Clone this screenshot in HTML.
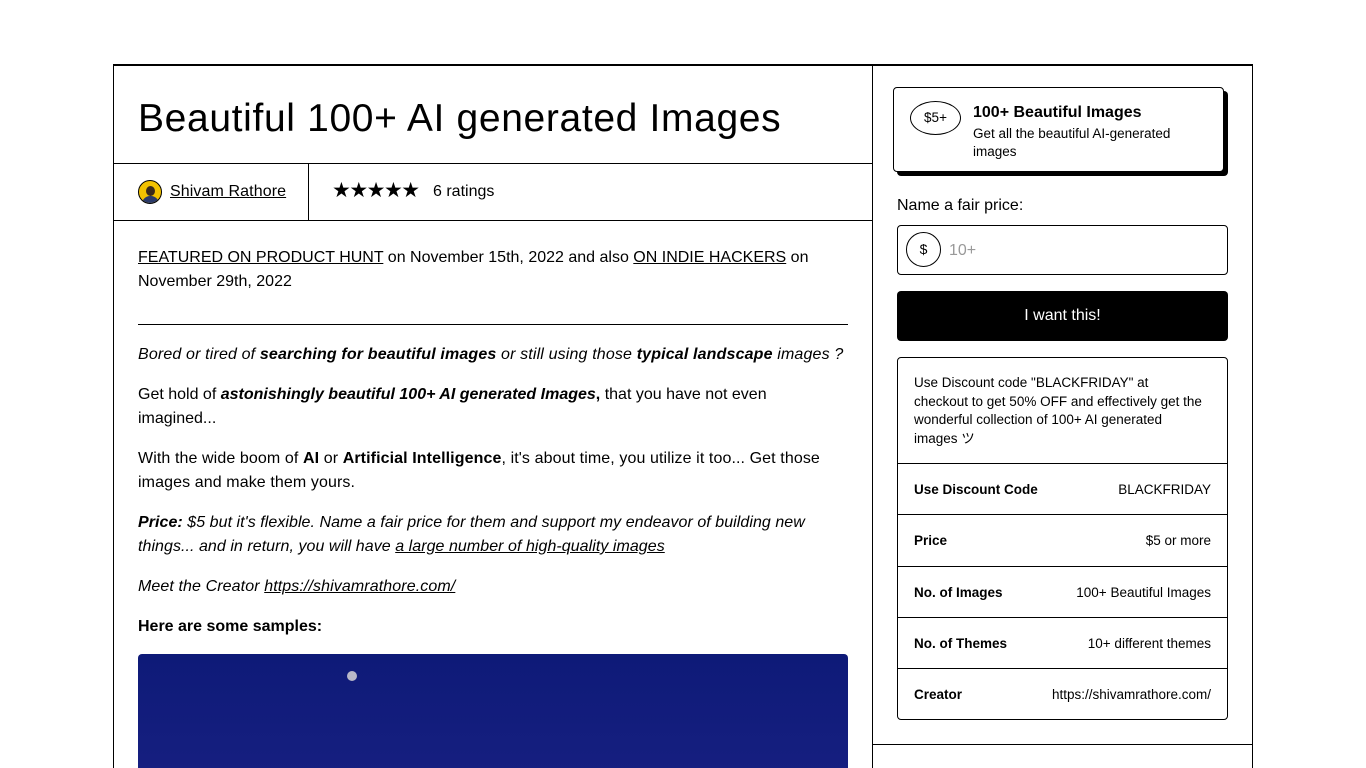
<!DOCTYPE html>
<html><head><meta charset="utf-8"><style>
*{margin:0;padding:0;box-sizing:border-box}
html,body{width:1366px;height:768px;overflow:hidden}
body{background:#fff;font-family:"Liberation Sans",sans-serif;color:#000;position:relative}
.a{position:absolute}
.l{position:absolute;background:#000}
u{text-decoration:underline}
p{position:absolute;left:138px;width:712px;font-size:16px;line-height:24px}
.row{position:absolute;left:898px;width:329px;height:51px;border-top:1px solid #000;display:flex;justify-content:space-between;align-items:center;padding:0 16px;font-size:13.5px}
.row b{font-weight:bold}
</style></head><body>
<div class="a" style="left:113px;top:64px;width:1140px;height:704px;border:1px solid #000;border-top:2px solid #000;border-bottom:none"></div>
<div class="l" style="left:872px;top:65px;width:1px;height:703px"></div>
<div class="l" style="left:113px;top:163px;width:759px;height:1px"></div>
<div class="l" style="left:113px;top:220px;width:759px;height:1px"></div>
<div class="l" style="left:308px;top:163px;width:1px;height:57px"></div>
<div class="a" style="left:138px;top:95px;font-size:39px;line-height:48px;letter-spacing:0.65px">Beautiful 100+ AI generated Images</div>
<div class="a" style="left:138px;top:180px;width:24px;height:24px;border-radius:50%;background:#f2c200;border:1px solid #000;overflow:hidden"><div class="a" style="left:7px;top:5px;width:9px;height:10px;border-radius:50%;background:#3a2a1a"></div><div class="a" style="left:3px;top:15px;width:17px;height:10px;border-radius:8px 8px 0 0;background:#2a3a6a"></div></div>
<div class="a" style="left:170px;top:183px;font-size:16px;letter-spacing:0.1px"><u>Shivam Rathore</u></div>
<div class="a" style="left:332px;top:178px;font-size:21px;letter-spacing:-1.5px;line-height:26px">★★★★★</div>
<div class="a" style="left:433px;top:183px;font-size:16px">6 ratings</div>
<p style="top:246px"><u>FEATURED ON PRODUCT HUNT</u> on November 15th, 2022 and also <u>ON INDIE HACKERS</u> on November 29th, 2022</p>
<div class="l" style="left:138px;top:324px;width:710px;height:1px"></div>
<p style="top:343px;font-style:italic;letter-spacing:0.15px;white-space:nowrap">Bored or tired of <b>searching for beautiful images</b> or still using those <b>typical landscape</b> images ?</p>
<p style="top:383px;width:660px">Get hold of <b><i>astonishingly beautiful 100+ AI generated Images</i>,</b> that you have not even imagined...</p>
<p style="top:447px;letter-spacing:0.1px">With the wide boom of <b>AI</b> or <b>Artificial Intelligence</b>, it's about time, you utilize it too... Get those images and make them yours.</p>
<p style="top:511px;font-style:italic;width:700px;letter-spacing:0.05px"><b>Price:</b> $5 but it's flexible. Name a fair price for them and support my endeavor of building new things... and in return, you will have <u>a large number of high-quality images</u></p>
<p style="top:575px;font-style:italic;letter-spacing:0.1px">Meet the Creator <u>https://shivamrathore.com/</u></p>
<p style="top:615px"><b>Here are some samples:</b></p>
<div class="a" style="left:138px;top:654px;width:710px;height:120px;border-radius:4px;background:linear-gradient(180deg,#0e1a78,#161f80)"><div class="a" style="left:209px;top:17px;width:10px;height:10px;border-radius:50%;background:#b8b8c8"></div></div>
<div class="a" style="left:897px;top:91px;width:331px;height:85px;background:#000;border-radius:4px"></div>
<div class="a" style="left:893px;top:87px;width:331px;height:85px;background:#fff;border:1px solid #000;border-radius:4px"></div>
<div class="a" style="left:910px;top:101px;width:51px;height:34px;border:1px solid #000;border-radius:50%;font-size:13.5px;text-align:center;line-height:32px">$5+</div>
<div class="a" style="left:973px;top:104px;font-size:16px;font-weight:bold">100+ Beautiful Images</div>
<div class="a" style="left:973px;top:125px;width:215px;font-size:13.5px;line-height:18px">Get all the beautiful AI-generated images</div>
<div class="a" style="left:897px;top:197px;font-size:16px">Name a fair price:</div>
<div class="a" style="left:897px;top:225px;width:331px;height:50px;border:1px solid #000;border-radius:4px"></div>
<div class="a" style="left:906px;top:232px;width:35px;height:35px;border:1px solid #000;border-radius:50%;text-align:center;line-height:33px;font-size:14px">$</div>
<div class="a" style="left:949px;top:242px;font-size:16px;color:#999">10+</div>
<div class="a" style="left:897px;top:291px;width:331px;height:50px;background:#000;border-radius:4px;color:#fff;text-align:center;line-height:50px;font-size:16px">I want this!</div>
<div class="a" style="left:897px;top:357px;width:331px;height:363px;border:1px solid #000;border-radius:4px"></div>
<div class="a" style="left:914px;top:374px;width:290px;font-size:13.5px;line-height:18.5px">Use Discount code "BLACKFRIDAY" at checkout to get 50% OFF and effectively get the wonderful collection of 100+ AI generated images ツ</div>
<div class="row" style="top:463px"><b>Use Discount Code</b><span>BLACKFRIDAY</span></div>
<div class="row" style="top:514px"><b>Price</b><span>$5 or more</span></div>
<div class="row" style="top:566px"><b>No. of Images</b><span>100+ Beautiful Images</span></div>
<div class="row" style="top:617px"><b>No. of Themes</b><span>10+ different themes</span></div>
<div class="row" style="top:668px"><b>Creator</b><span>https://shivamrathore.com/</span></div>
<div class="l" style="left:872px;top:744px;width:380px;height:1px"></div>
</body></html>
